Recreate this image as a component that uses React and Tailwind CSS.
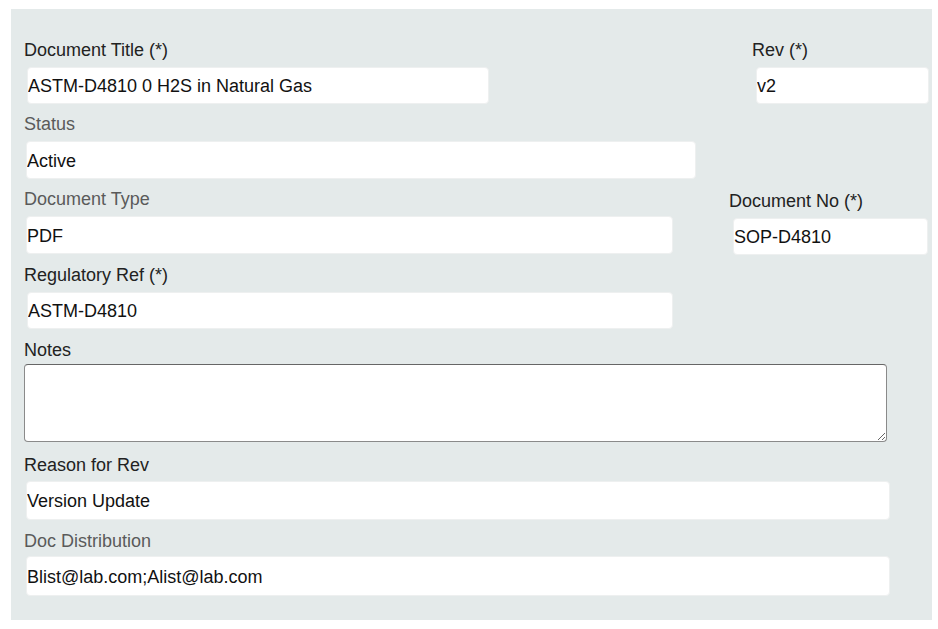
import React from 'react';

const labelDark = "block h-[21px] leading-[21px] text-[18px] text-[#222]";
const labelGray = "block h-[21px] leading-[21px] text-[18px] text-[#5a5a5a]";
const inputCls = "block bg-white border border-[#eef0f0] rounded-[4px] px-0 pt-[2px] text-[18px] text-[#111] outline-none";

function Field({ label, value, labelClass = labelDark, width, height = 'h-[38px]', inputMl = 'ml-[2px]' }) {
    return (
        <div>
            <label className={labelClass}>{label}</label>
            <input
                type="text"
                readOnly
                defaultValue={value}
                className={`${inputCls} ${inputMl} ${width} ${height} mt-[6px]`}
            />
        </div>
    );
}

export default function App() {
    return (
        <div className="bg-white w-[938px] h-[629px] pt-[9px] pl-[11px]" style={{ fontFamily: '"Liberation Sans", Arial, sans-serif' }}>
            <div className="bg-[#e4eaea] w-[921px] h-[611px] pl-[13px] pt-[31px]">
                {/* row 1 */}
                <div className="flex">
                    <div className="w-[465px]">
                        <Field label="Document Title (*)" value="ASTM-D4810 0 H2S in Natural Gas" width="w-[462px]" height="h-[37px]" inputMl="ml-[3px]" />
                    </div>
                    <div className="ml-[263px]">
                        <Field label="Rev (*)" value="v2" width="w-[173px]" height="h-[37px]" inputMl="ml-[4px]" />
                    </div>
                </div>

                {/* status */}
                <div className="mt-[10px]">
                    <Field label="Status" labelClass={labelGray} value="Active" width="w-[670px]" />
                </div>

                {/* row 3 */}
                <div className="flex mt-[10px]">
                    <div className="w-[649px]">
                        <Field label="Document Type" labelClass={labelGray} value="PDF" width="w-[647px]" />
                    </div>
                    <div className="ml-[56px] pt-[2px]">
                        <Field label="Document No (*)" value="SOP-D4810" width="w-[195px]" height="h-[37px]" inputMl="ml-[4px]" />
                    </div>
                </div>

                {/* regulatory ref */}
                <div className="mt-[10px]">
                    <Field label="Regulatory Ref (*)" value="ASTM-D4810" width="w-[646px]" height="h-[37px]" inputMl="ml-[3px]" />
                </div>

                {/* notes */}
                <div className="mt-[11px]">
                    <label className={labelDark}>Notes</label>
                    <textarea
                        readOnly
                        className="block mt-[3px] w-[863px] h-[78px] bg-white border border-[#8a8a8a] border-t-[#666] rounded-[4px] text-[18px] outline-none"
                    />
                </div>

                {/* reason */}
                <div className="mt-[13px]">
                    <label className={labelDark}>Reason for Rev</label>
                    <input type="text" readOnly defaultValue="Version Update" className={`${inputCls} ml-[2px] w-[864px] h-[39px] mt-[5px]`} />
                </div>

                {/* distribution */}
                <div className="mt-[11px]">
                    <label className={labelGray}>Doc Distribution</label>
                    <input type="text" readOnly defaultValue="Blist@lab.com;Alist@lab.com" className={`${inputCls} ml-[2px] w-[864px] h-[40px] mt-[4px]`} />
                </div>
            </div>
        </div>
    );
}
